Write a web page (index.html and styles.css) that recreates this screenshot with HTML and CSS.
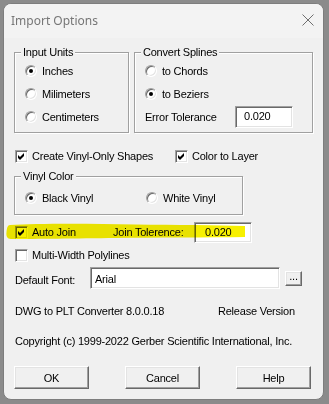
FILE: index.html
```html
<!DOCTYPE html>
<html>
<head>
<meta charset="utf-8">
<link rel="stylesheet" href="styles.css">
</head>
<body>
<div class="dialog">
  <div class="titlebar">
    <span class="title">Import Options</span>
    <svg class="close" width="12" height="12" viewBox="0 0 12 12"><path d="M0.5 0.5 L11.5 11.5 M11.5 0.5 L0.5 11.5" stroke="#6f6f6f" stroke-width="1" fill="none"/></svg>
  </div>
  <div class="content">
    <div class="groups">
      <fieldset class="group g-units">
        <legend>Input Units</legend>
        <div class="opt"><span class="radio on"></span><span>Inches</span></div>
        <div class="opt"><span class="radio"></span><span>Milimeters</span></div>
        <div class="opt"><span class="radio"></span><span>Centimeters</span></div>
      </fieldset>
      <fieldset class="group g-splines">
        <legend>Convert Splines</legend>
        <div class="opt"><span class="radio"></span><span>to Chords</span></div>
        <div class="opt"><span class="radio on"></span><span>to Beziers</span></div>
        <div class="opt tol"><span class="tol-label">Error Tolerance</span><span class="edit edit-err">0.020</span></div>
      </fieldset>
    </div>

    <div class="row chkrow">
      <div class="item item-shapes"><span class="chk on"><svg width="7" height="7" viewBox="0 0 7 7"><path d="M0 2 L2 4 L6 0 L6 3 L2 7 L0 5 Z" fill="#000"/></svg></span><span>Create Vinyl-Only Shapes</span></div>
      <div class="item"><span class="chk on"><svg width="7" height="7" viewBox="0 0 7 7"><path d="M0 2 L2 4 L6 0 L6 3 L2 7 L0 5 Z" fill="#000"/></svg></span><span>Color to Layer</span></div>
    </div>

    <fieldset class="group g-vinyl">
      <legend>Vinyl Color</legend>
      <div class="opt vinyl-opts">
        <div class="item item-black"><span class="radio on"></span><span>Black Vinyl</span></div>
        <div class="item"><span class="radio"></span><span>White Vinyl</span></div>
      </div>
    </fieldset>

    <div class="row joinrow">
      <div class="item item-join"><span class="chk on"><svg width="7" height="7" viewBox="0 0 7 7"><path d="M0 2 L2 4 L6 0 L6 3 L2 7 L0 5 Z" fill="#000"/></svg></span><span>Auto Join</span></div>
      <span class="join-label">Join Tolerence:</span>
      <span class="edit edit-join">0.020</span>
      <svg class="highlight" width="240" height="19" viewBox="0 0 240 19"><path d="M4 3 C30 1.5 80 1.5 130 2.5 C170 3 210 3 239 4 L239 15 C200 15.5 150 15.5 110 16 C70 16.5 30 17 5 17 C1 17 0 14 0.5 10 C1 6 1.5 3.2 4 3 Z" fill="#f7f000"/></svg>
    </div>

    <div class="row multirow">
      <div class="item"><span class="chk"></span><span>Multi-Width Polylines</span></div>
    </div>

    <div class="row fontrow">
      <span class="font-label">Default Font:</span>
      <span class="edit edit-font">Arial</span>
      <span class="btn btn-dots">...</span>
    </div>

    <div class="row textrow verrow">
      <span class="ver">DWG to PLT Converter 8.0.0.18</span>
      <span>Release Version</span>
    </div>

    <div class="row textrow copyrow">
      <span>Copyright (c) 1999-2022 Gerber Scientific International, Inc.</span>
    </div>

    <div class="row buttons">
      <span class="btn btn-main">OK</span>
      <span class="btn btn-main">Cancel</span>
      <span class="btn btn-main">Help</span>
    </div>
  </div>
</div>
</body>
</html>
```

FILE: styles.css
```css
html, body {
  margin: 0;
  padding: 0;
}
body {
  background: #8b8b8b;
  width: 329px;
  height: 404px;
  overflow: hidden;
  font-family: "Liberation Sans", Arial, sans-serif;
  font-size: 11px;
  letter-spacing: -0.22px;
  color: #000;
}
.dialog {
  box-sizing: border-box;
  margin: 3px 0 0 3px;
  width: 321px;
  height: 397px;
  background: #f0f0f0;
  border: 1px solid #7d7d7d;
  border-radius: 8px;
  overflow: hidden;
}
.titlebar {
  height: 34px;
  background: #f3f3f3;
  display: flex;
  align-items: center;
  justify-content: space-between;
  padding: 0 9px 0 7px;
}
.title {
  font-family: "Noto Sans", "Open Sans", sans-serif;
  font-size: 12px;
  letter-spacing: 0;
  color: #767676;
  margin-top: -2px;
}
.close {
  display: block;
  margin-top: -3px;
}
.content {
  padding-left: 10px;
  display: flex;
  flex-direction: column;
  align-items: flex-start;
}
.groups {
  margin-top: 8px;
  display: flex;
  gap: 5px;
}
.group {
  margin: 0;
  padding: 0 0 4px 0;
  border: 1px solid #a0a0a0;
  box-shadow: inset 1px 1px 0 #fff, 1px 1px 0 #fff;
  box-sizing: border-box;
  min-width: 0;
}
.group legend {
  margin-left: 6px;
  padding: 0 2px;
  line-height: 13px;
  height: 13px;
  background: #f0f0f0;
}
.g-units { width: 115px; }
.g-splines { width: 179px; }
.opt {
  height: 23px;
  display: flex;
  align-items: center;
  padding-left: 10px;
}
.opt .radio { margin-right: 5px; }
.tol-label { width: 90px; }
.radio {
  box-sizing: border-box;
  width: 12px;
  height: 12px;
  border-radius: 50%;
  background: #fff;
  border: 1px solid;
  border-color: #a0a0a0 #fff #fff #a0a0a0;
  box-shadow: inset 1px 1px 0 #696969, inset -1px -1px 0 #e3e3e3;
  display: flex;
  align-items: center;
  justify-content: center;
  flex: none;
}
.radio.on::after {
  content: "";
  width: 4px;
  height: 4px;
  border-radius: 50%;
  background: #000;
}
.chk {
  box-sizing: border-box;
  width: 13px;
  height: 13px;
  background: #fff;
  border: 1px solid;
  border-color: #a0a0a0 #fff #fff #a0a0a0;
  box-shadow: inset 1px 1px 0 #696969, inset -1px -1px 0 #e3e3e3;
  display: flex;
  align-items: center;
  justify-content: center;
  flex: none;
  margin-right: 4px;
}
.chk svg { display: block; }
.edit {
  box-sizing: border-box;
  background: #fff;
  border: 1px solid;
  border-color: #a0a0a0 #fff #fff #a0a0a0;
  box-shadow: inset 1px 1px 0 #696969, inset -1px -1px 0 #e3e3e3;
  height: 22px;
  line-height: 13px;
  padding-top: 3px;
  display: block;
  flex: none;
}
.edit-err { width: 58px; padding-left: 8px; }
.edit-join { width: 58px; padding-left: 10px; height: 21px; padding-top: 3px; }
.edit-font { width: 190px; padding-left: 4px; padding-top: 5px; }
.row {
  display: flex;
  align-items: center;
}
.item {
  display: flex;
  align-items: center;
}
.chkrow {
  margin-top: 15px;
  height: 16px;
  padding-left: 1px;
}
.item-shapes { width: 160px; }
.g-vinyl {
  margin-top: 6px;
  width: 229px;
  padding-top: 3px;
  padding-bottom: 5px;
}
.vinyl-opts { height: 23px; }
.item-black { width: 121px; }
.item .radio { margin-right: 5px; }
.joinrow {
  position: relative;
  margin-top: 6px;
  height: 22px;
  padding-left: 1px;
}
.item-join { width: 98px; }
.join-label { width: 81px; }
.highlight {
  position: absolute;
  left: -8px;
  top: 1px;
  mix-blend-mode: multiply;
  pointer-events: none;
}
.multirow {
  margin-top: 4px;
  height: 16px;
  padding-left: 1px;
}
.fontrow {
  margin-top: 4px;
  height: 22px;
  padding-left: 1px;
}
.font-label { width: 75px; margin-top: 4px; }
.btn {
  box-sizing: border-box;
  display: flex;
  align-items: center;
  justify-content: center;
  background: #f0f0f0;
  border: 1px solid;
  border-color: #fff #696969 #696969 #fff;
  box-shadow: inset -1px -1px 0 #a0a0a0, inset 1px 1px 0 #e3e3e3;
}
.btn-dots {
  width: 17px;
  height: 15px;
  margin-left: 5px;
  line-height: 11px;
  padding-bottom: 3px;
}
.textrow {
  height: 14px;
  padding-left: 1px;
}
.verrow { margin-top: 15px; }
.ver { width: 203px; }
.copyrow { margin-top: 16px; }
.buttons {
  margin-top: 18px;
  width: 297px;
  justify-content: space-between;
}
.btn-main {
  width: 75px;
  height: 23px;
}
```
